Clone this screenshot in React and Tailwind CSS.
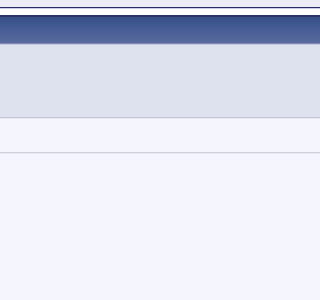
export default function App() {
  return (
    <div className="w-full h-[300px] overflow-hidden bg-[#f5f5fd] flex flex-col">
      {/* top strip */}
      <div className="h-[7px] bg-[#ececf6]" />
      <div className="h-[1px] bg-[#2a2d63]" />
      <div className="h-[1px] bg-[#c9cbe6]" />
      <div className="h-[6px] bg-white" />
      <div className="h-[2px] bg-[#2b3463]" />
      {/* header bar */}
      <div className="h-[26px] bg-gradient-to-b from-[#36508a] to-[#596b9e]" />
      <div className="h-[1px] bg-[#8088b3]" />
      <div className="h-[1px] bg-[#c4c9dd]" />
      {/* toolbar panel */}
      <div className="h-[72px] bg-[#dee2ee]" />
      <div className="h-[1px] bg-[#c3c5d2]" />
      <div className="h-[1px] bg-[#e8e8f3]" />
      {/* row */}
      <div className="h-[33px] bg-[#f5f5fd]" />
      <div className="h-[1px] bg-[#cfcfd9]" />
      <div className="h-[1px] bg-[#e9e9f3]" />
      <div className="flex-1 bg-[#f5f5fd]" />
    </div>
  );
}
